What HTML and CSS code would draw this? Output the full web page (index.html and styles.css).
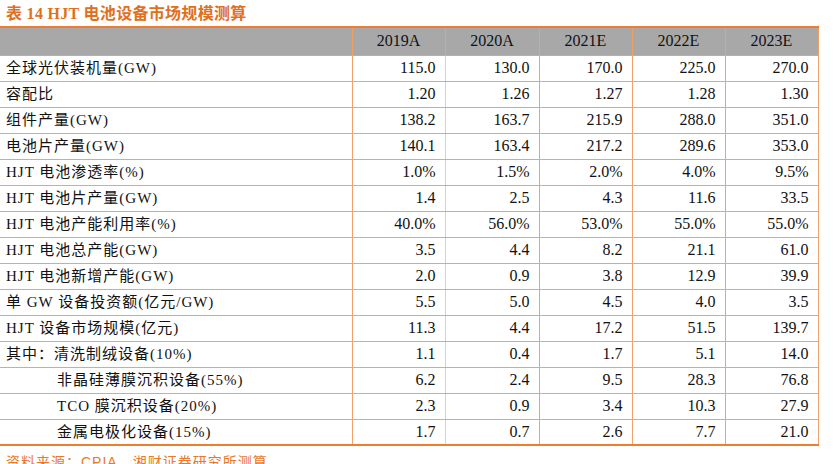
FILE: index.html
```
<!DOCTYPE html>
<html lang="zh">
<head>
<meta charset="utf-8">
<link rel="stylesheet" href="styles.css">
</head>
<body>
<div class="page">
  <div class="title">表 14 HJT 电池设备市场规模测算</div>
  <table class="grid">
    <colgroup>
      <col class="c-label"><col class="c93"><col class="c94"><col class="c93"><col class="c93"><col class="c93">
    </colgroup>
    <thead>
      <tr><th></th><th>2019A</th><th>2020A</th><th>2021E</th><th>2022E</th><th>2023E</th></tr>
    </thead>
    <tbody>
      <tr><td>全球光伏装机量(GW)</td><td>115.0</td><td>130.0</td><td>170.0</td><td>225.0</td><td>270.0</td></tr>
      <tr><td>容配比</td><td>1.20</td><td>1.26</td><td>1.27</td><td>1.28</td><td>1.30</td></tr>
      <tr><td>组件产量(GW)</td><td>138.2</td><td>163.7</td><td>215.9</td><td>288.0</td><td>351.0</td></tr>
      <tr><td>电池片产量(GW)</td><td>140.1</td><td>163.4</td><td>217.2</td><td>289.6</td><td>353.0</td></tr>
      <tr><td>HJT 电池渗透率(%)</td><td>1.0%</td><td>1.5%</td><td>2.0%</td><td>4.0%</td><td>9.5%</td></tr>
      <tr><td>HJT 电池片产量(GW)</td><td>1.4</td><td>2.5</td><td>4.3</td><td>11.6</td><td>33.5</td></tr>
      <tr><td>HJT 电池产能利用率(%)</td><td>40.0%</td><td>56.0%</td><td>53.0%</td><td>55.0%</td><td>55.0%</td></tr>
      <tr><td>HJT 电池总产能(GW)</td><td>3.5</td><td>4.4</td><td>8.2</td><td>21.1</td><td>61.0</td></tr>
      <tr><td>HJT 电池新增产能(GW)</td><td>2.0</td><td>0.9</td><td>3.8</td><td>12.9</td><td>39.9</td></tr>
      <tr><td>单 GW 设备投资额(亿元/GW)</td><td>5.5</td><td>5.0</td><td>4.5</td><td>4.0</td><td>3.5</td></tr>
      <tr><td>HJT 设备市场规模(亿元)</td><td>11.3</td><td>4.4</td><td>17.2</td><td>51.5</td><td>139.7</td></tr>
      <tr><td>其中：清洗制绒设备(10%)</td><td>1.1</td><td>0.4</td><td>1.7</td><td>5.1</td><td>14.0</td></tr>
      <tr><td class="sub">非晶硅薄膜沉积设备(55%)</td><td>6.2</td><td>2.4</td><td>9.5</td><td>28.3</td><td>76.8</td></tr>
      <tr><td class="sub">TCO 膜沉积设备(20%)</td><td>2.3</td><td>0.9</td><td>3.4</td><td>10.3</td><td>27.9</td></tr>
      <tr><td class="sub">金属电极化设备(15%)</td><td>1.7</td><td>0.7</td><td>2.6</td><td>7.7</td><td>21.0</td></tr>
    </tbody>
  </table>
  <div class="source">资料来源：<span class="sans">CPIA</span>，湘财证券研究所测算</div>
</div>
</body>
</html>
```
FILE: styles.css
```
html, body {
  margin: 0;
  padding: 0;
  background: #ffffff;
}
.page {
  width: 836px;
  height: 464px;
  overflow: hidden;
  font-family: "Liberation Serif", "Noto Sans CJK SC", serif;
  color: #111111;
}
.title {
  height: 26px;
  padding-left: 6px;
  box-sizing: border-box;
  padding-top: 4px;
  font-size: 16px;
  line-height: 20px;
  font-weight: bold;
  color: #e0701e;
  letter-spacing: 0.3px;
}
.grid {
  border-collapse: collapse;
  table-layout: fixed;
  width: 818px;
  font-size: 16px;
}
.c-label { width: 352px; }
.c93 { width: 93px; }
.c94 { width: 94px; }
.grid thead th {
  height: 28px;
  padding: 0;
  background: #a8a8a8;
  font-weight: normal;
  text-align: center;
  border-top: 2px solid #ed7d31;
  border-bottom: 1px solid #f0a060;
  border-left: 1px solid #f0a060;
  border-right: 1px solid #f0a060;
  box-sizing: border-box;
}
.grid thead th:first-child { border-left: none; }
.grid td {
  height: 26px;
  padding: 0 9px 0 0;
  text-align: right;
  border-bottom: 1px solid #f2a36b;
  border-left: 1px solid #f2a36b;
  border-right: 1px solid #f2a36b;
  box-sizing: border-box;
  line-height: 20px;
  white-space: nowrap;
}
.grid td:first-child {
  text-align: left;
  padding-left: 6px;
  border-left: none;
  font-size: 15px;
  letter-spacing: 1px;
}
.grid td:nth-child(2) { border-right-color: #f8c9a4; }
.grid td.sub { padding-left: 57px; }
.grid tbody tr:last-child td { border-bottom: 2px solid #ed7d31; }
.source {
  padding-left: 6px;
  padding-top: 6px;
  font-size: 14px;
  line-height: 20px;
  color: #e8782a;
  letter-spacing: 1px;
}
.sans { font-family: "Liberation Sans", sans-serif; }
```
